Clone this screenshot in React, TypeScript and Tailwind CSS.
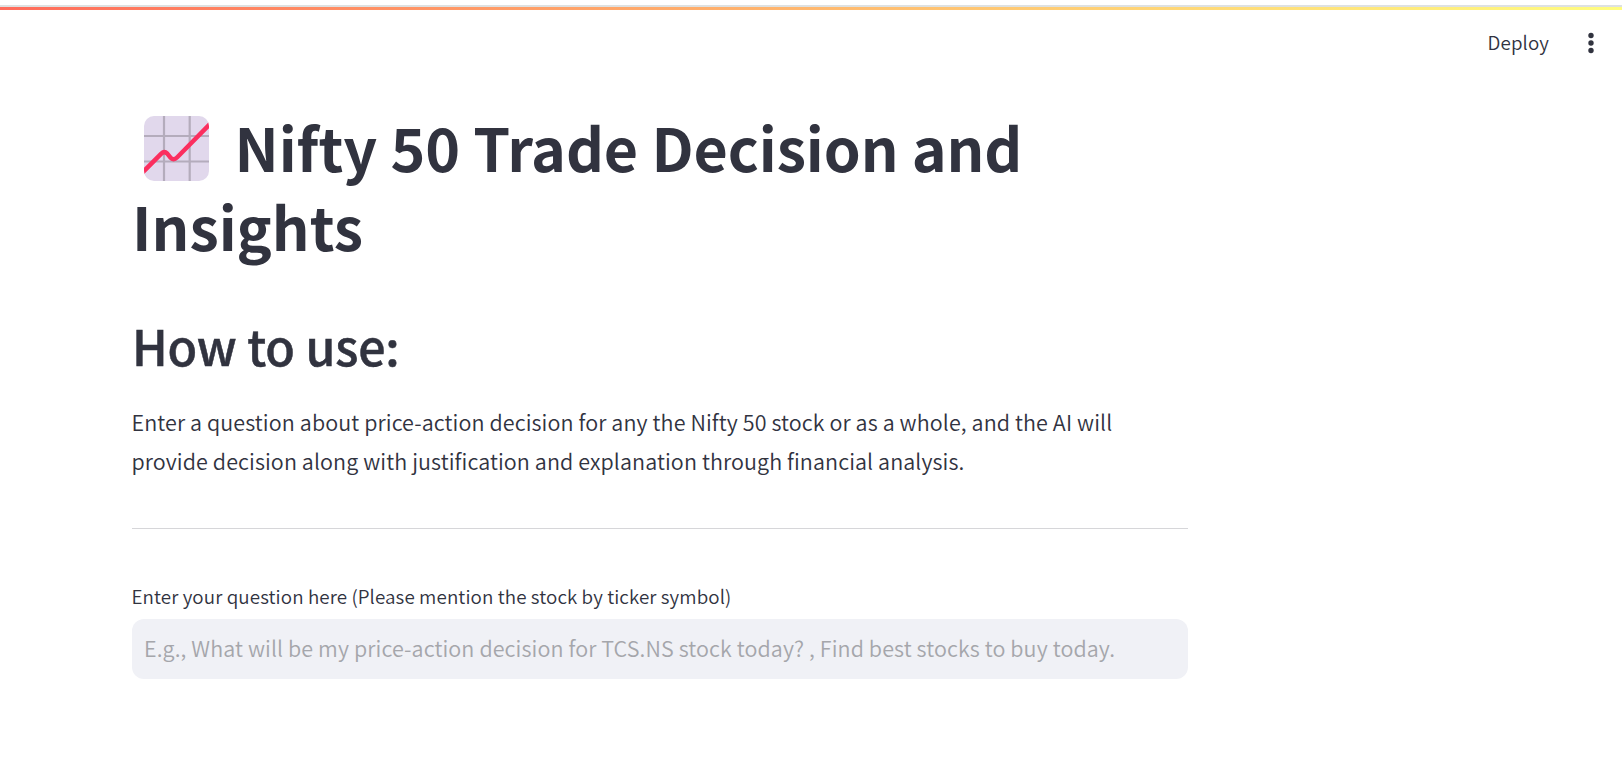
function ChartIcon() {
  return (
    <svg width="65" height="65" viewBox="0 0 65 65" className="mt-[9px] ml-3 shrink-0" aria-hidden="true">
      <defs>
        <clipPath id="tile">
          <rect width="65" height="65" rx="10" />
        </clipPath>
      </defs>
      <g clipPath="url(#tile)">
        <rect width="65" height="65" fill="#e1d8ec" />
        <path d="M20 0V65M45.7 0V65M0 20H65M0 45.5H65" stroke="#b4acbc" strokeWidth="2.2" fill="none" />
        <path
          d="M-2 57L17.3 37.7Q20.3 34.7 23.3 37.7L26.3 41.4Q29.5 44.9 33 41.5L67 7"
          stroke="#fb2f5f"
          strokeWidth="4.5"
          fill="none"
        />
      </g>
    </svg>
  );
}

export default function App() {
  return (
    <div className="flex h-[772px] w-[1622px] flex-col overflow-hidden bg-white font-['Noto_Sans_CJK_SC','Noto_Sans_CJK_JP',sans-serif] text-[#31333f]">
      <div className="mt-[5px] h-0.5 shrink-0 bg-[#dee1e1]" />
      <div className="h-[3px] shrink-0 bg-linear-to-r from-[#ff6b5b] to-[#fffd80]" />
      <header className="flex h-[66px] shrink-0 items-center justify-end pr-[25px]">
        <button className="pb-0.5 text-[18.8px] leading-[30px] font-[350] tracking-[0.1px]">Deploy</button>
        <button aria-label="Menu" className="ml-9">
          <svg width="12" height="22" viewBox="0 0 12 22" fill="currentColor">
            <circle cx="6" cy="3.5" r="2.7" />
            <circle cx="6" cy="11" r="2.7" />
            <circle cx="6" cy="18.5" r="2.7" />
          </svg>
        </button>
      </header>
      <main className="ml-[132px] w-[1056px] pt-[31px]">
        <h1 className="text-[59.1px] leading-[79px] font-bold whitespace-nowrap">
          <span className="flex">
            <ChartIcon />
            <span className="ml-[25.5px] tracking-[-0.09px]">Nifty 50 Trade Decision and</span>
          </span>
          <span className="block">Insights</span>
        </h1>
        <h2 className="mt-12 mb-[25px] text-[48.3px] leading-[64px] font-medium tracking-[-0.22px] whitespace-nowrap [-webkit-text-stroke:0.5px_#31333f]">
          How to use:
        </h2>
        <p className="-ml-[0.5px] text-[21.5px] leading-[39px] font-[350] tracking-[0.095px] whitespace-nowrap">
          <span className="block">Enter a question about price-action decision for any the Nifty 50 stock or as a whole, and the AI will</span>
          <span className="block">provide decision along with justification and explanation through financial analysis.</span>
        </p>
        <hr className="mt-12 border-0 border-t border-[#d6d6d9]" />
        <label htmlFor="question" className="mt-[51px] -ml-[0.5px] block text-[18.8px] leading-[31px] font-[350] tracking-[0.1px] whitespace-nowrap">
          Enter your question here (Please mention the stock by ticker symbol)
        </label>
        <input
          id="question"
          placeholder="E.g., What will be my price-action decision for TCS.NS stock today? , Find best stocks to buy today."
          className="mt-2 block h-[60px] w-full rounded-xl bg-[#f0f1f6] px-3 pb-[3px] text-[21.5px] font-[350] tracking-[0.1px] outline-none placeholder:text-[#a5a6ab]"
        />
      </main>
    </div>
  );
}
